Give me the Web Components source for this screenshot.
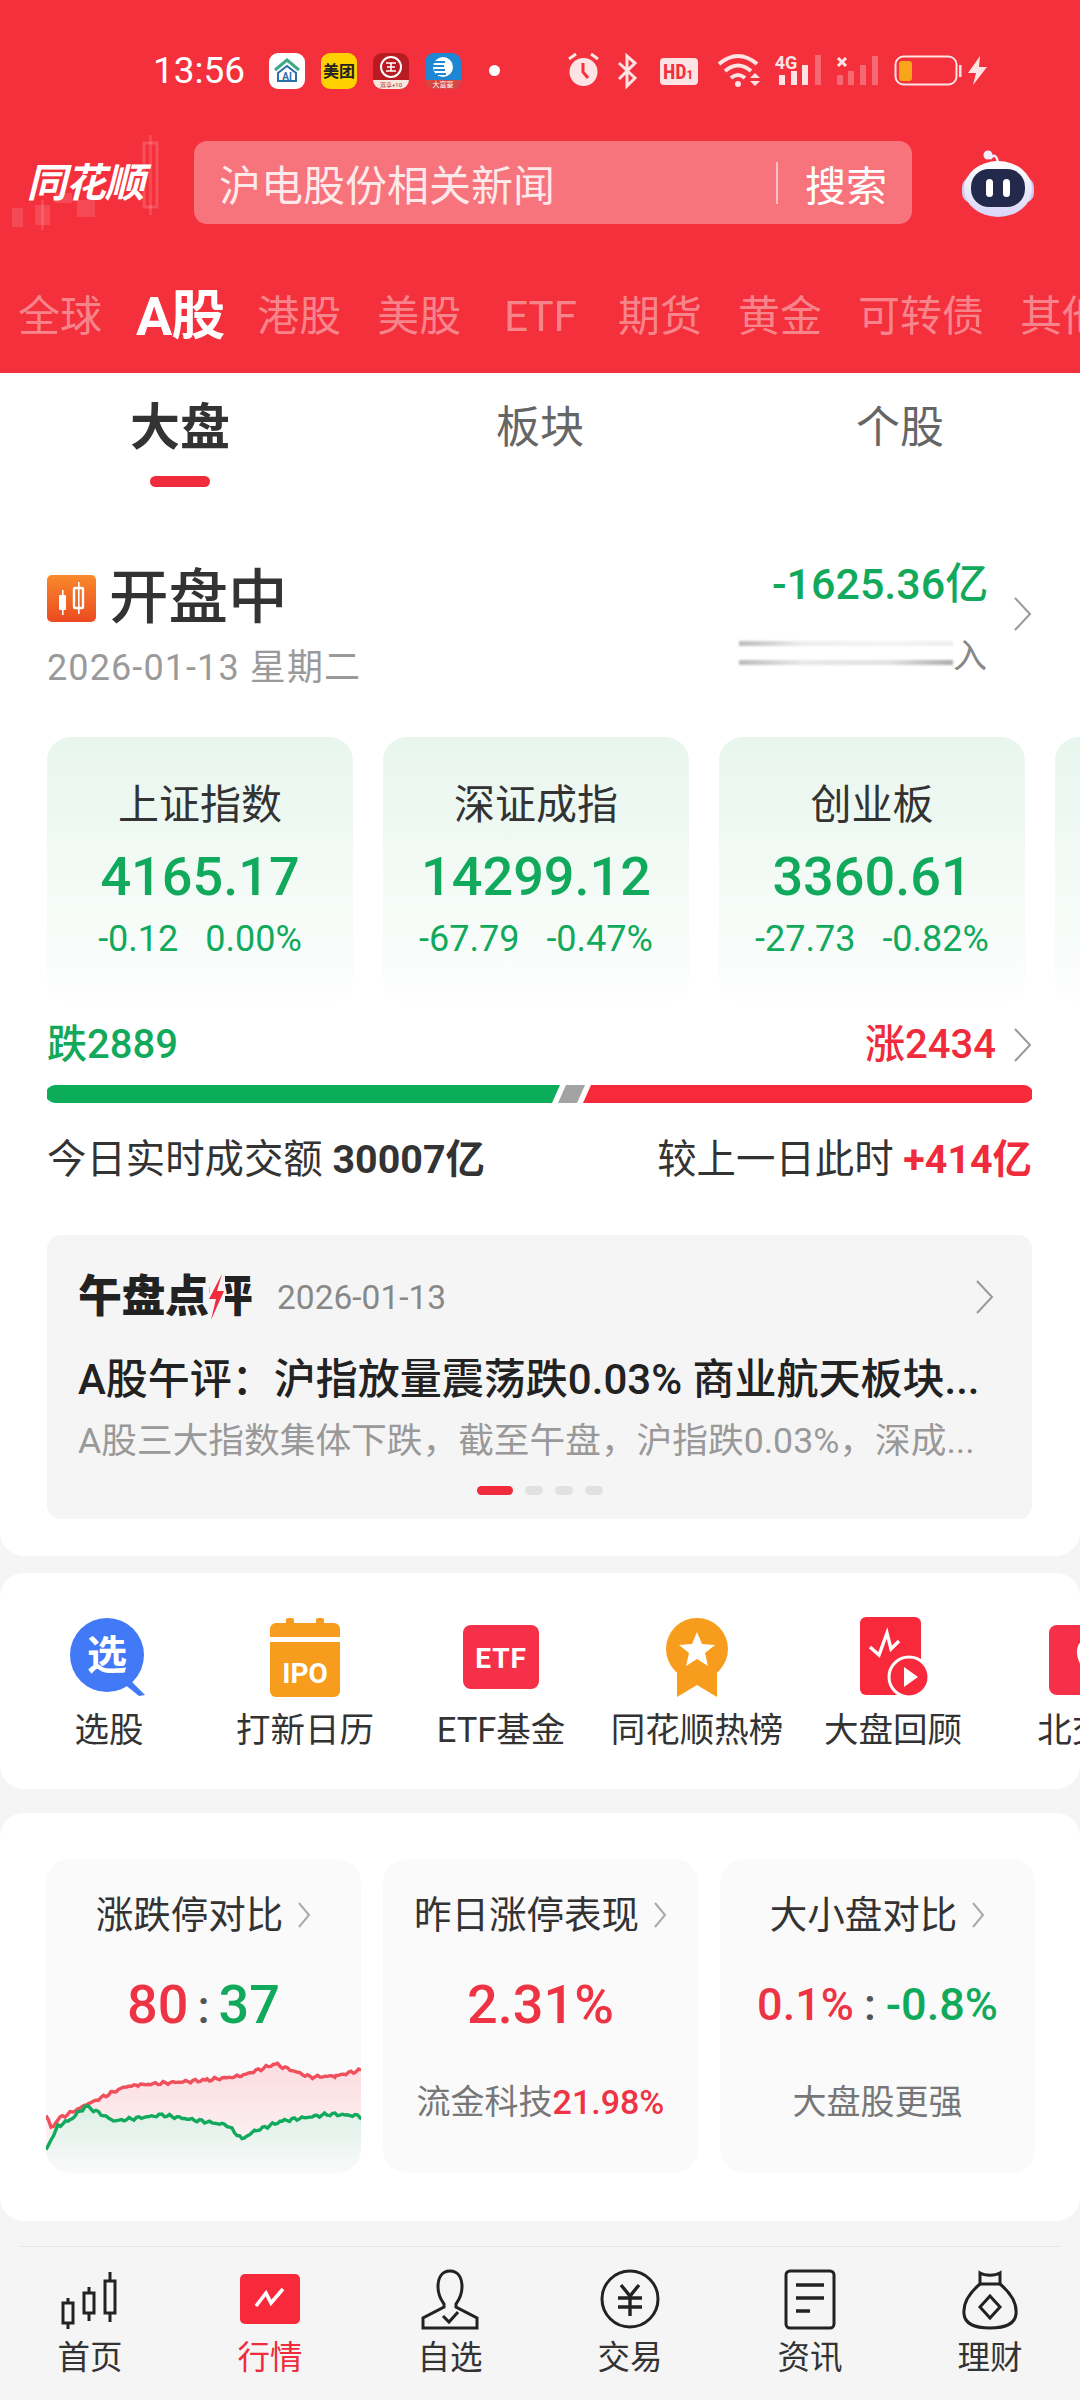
<!DOCTYPE html>
<html lang="zh">
<head>
<meta charset="utf-8">
<title>行情</title>
<style>
  html, body { margin: 0; padding: 0; }
  body {
    width: 1080px;
    height: 2400px;
    overflow: hidden;
    background: #f5f5f5;
    color: #333;
    font-family: Roboto, "Noto Sans CJK SC", sans-serif;
  }
</style>
</head>
<body>
<top-header></top-header>

<white-section kind="main">
  <sub-tabs></sub-tabs>
  <market-status></market-status>
  <index-row>
    <index-card name="上证指数" value="4165.17" change="-0.12" pct="0.00%"></index-card>
    <index-card name="深证成指" value="14299.12" change="-67.79" pct="-0.47%"></index-card>
    <index-card name="创业板" value="3360.61" change="-27.73" pct="-0.82%"></index-card>
    <index-card></index-card>
  </index-row>
  <breadth-bar></breadth-bar>
  <review-card></review-card>
</white-section>

<white-section kind="shortcuts">
  <shortcut-row>
    <shortcut-item icon="pick">选股</shortcut-item>
    <shortcut-item icon="ipo">打新日历</shortcut-item>
    <shortcut-item icon="etf">ETF基金</shortcut-item>
    <shortcut-item icon="medal">同花顺热榜</shortcut-item>
    <shortcut-item icon="replay">大盘回顾</shortcut-item>
    <shortcut-item icon="north">北交所</shortcut-item>
  </shortcut-row>
</white-section>

<white-section kind="compare">
  <compare-row>
    <compare-card title="涨跌停对比">
      <span slot="value" style="font-size:54px;font-weight:500"><span style="color:#ee3344">80</span><span style="color:#555;margin:0 9px;font-size:46px">:</span><span style="color:#11a95c">37</span></span>
      <limit-chart slot="foot"></limit-chart>
    </compare-card>
    <compare-card title="昨日涨停表现">
      <span slot="value" style="font-size:54px;font-weight:500;color:#ee3344">2.31%</span>
      <span slot="foot" class="foot" style="display:block;text-align:center;margin-top:41px;font-size:34px;line-height:44px;color:#777">流金科技<span style="color:#ee3344;font-weight:500">21.98%</span></span>
    </compare-card>
    <compare-card title="大小盘对比">
      <span slot="value" style="font-size:45px;font-weight:500"><span style="color:#ee3344">0.1%</span><span style="color:#555;margin:0 10px">:</span><span style="color:#11a95c">-0.8%</span></span>
      <span slot="foot" style="display:block;text-align:center;margin-top:41px;font-size:34px;line-height:44px;color:#777">大盘股更强</span>
    </compare-card>
  </compare-row>
</white-section>

<bottom-nav>
  <nav-item icon="home">首页</nav-item>
  <nav-item icon="quote" active>行情</nav-item>
  <nav-item icon="self">自选</nav-item>
  <nav-item icon="trade">交易</nav-item>
  <nav-item icon="news">资讯</nav-item>
  <nav-item icon="money">理财</nav-item>
</bottom-nav>

<script>
class ChevRight extends HTMLElement {
    constructor() {
        super();
        this.attachShadow({ mode: 'open' });
    }

    connectedCallback() {
        const w = this.getAttribute('w') || 19;
        const h = this.getAttribute('h') || 36;
        const color = this.getAttribute('color') || '#999';
        this.shadowRoot.innerHTML = `
            <style>:host { display: inline-flex; flex: none; }</style>
            <svg width="${w}" height="${h}" viewBox="0 0 ${w} ${h}">
                <path d="M2 2 L${w - 2} ${h / 2} L2 ${h - 2}" fill="none" stroke="${color}" stroke-width="2"/>
            </svg>`;
    }
}

class StatusBar extends HTMLElement {
    constructor() {
        super();
        this.attachShadow({ mode: 'open' });
    }

    connectedCallback() {
        const s = '#fde3e3';
        const dim = 'rgba(255,255,255,.28)';
        this.shadowRoot.innerHTML = `
            <style>
                :host { display: flex; align-items: center; height: 141px; padding-left: 153px; box-sizing: border-box; color: #fff; }
                .time { width: 93px; font-size: 37px; line-height: 40px; }
                .apps { display: flex; gap: 16px; margin-left: 23px; }
                .app { width: 36px; height: 36px; border-radius: 9px; overflow: hidden; display: block; }
                .dot { width: 11px; height: 11px; border-radius: 50%; background: #fff; margin-left: 28px; }
                .sys { margin-left: auto; margin-right: 90px; display: block; }
            </style>
            <span class="time">13:56</span>
            <div class="apps">
                <svg class="app" viewBox="0 0 36 36">
                    <rect width="36" height="36" fill="#fff"/>
                    <path d="M6 17 L18 7 L30 17" fill="none" stroke="#3eaa8c" stroke-width="3"/>
                    <path d="M9 20 V28 H27 V20 L18 13 Z" fill="none" stroke="#2a6fa8" stroke-width="2"/>
                    <text x="18" y="27" font-size="10" font-weight="700" fill="#2a6fa8" text-anchor="middle">AI</text>
                </svg>
                <svg class="app" viewBox="0 0 36 36">
                    <rect width="36" height="36" fill="#ffd100"/>
                    <text x="18" y="24" font-size="16" font-weight="700" fill="#222" text-anchor="middle">美团</text>
                </svg>
                <svg class="app" viewBox="0 0 36 36">
                    <rect width="36" height="36" fill="#b81c22"/>
                    <rect y="27" width="36" height="9" fill="#f6e9e2"/>
                    <circle cx="18" cy="14" r="10" fill="none" stroke="#fff" stroke-width="2"/>
                    <path d="M13 10 H23 M13 18 H23 M18 10 V18 M14 14 H22" stroke="#fff" stroke-width="1.6"/>
                    <text x="18" y="34" font-size="6" fill="#b81c22" text-anchor="middle">双享+10</text>
                </svg>
                <svg class="app" viewBox="0 0 36 36">
                    <rect width="36" height="36" fill="#1d87d3"/>
                    <circle cx="18" cy="14" r="10" fill="#fff"/>
                    <path d="M9 9 H20 M8 13 H19 M9 17 H20 M11 21 H21" stroke="#1d87d3" stroke-width="2"/>
                    <rect y="27" width="36" height="9" fill="#d8473f"/>
                    <text x="18" y="34" font-size="7" fill="#fff" text-anchor="middle">大富豪</text>
                </svg>
            </div>
            <span class="dot"></span>
            <svg class="sys" width="422" height="40" viewBox="0 0 422 40">
                <circle cx="15.5" cy="21" r="14" fill="${s}"/>
                <path d="M15 12 V21 L20 27" fill="none" stroke="#f3303c" stroke-width="3"/>
                <path d="M1 8 L8 3 M30 8 L23 3" stroke="${s}" stroke-width="3"/>
                <path d="M51 12 L67 27 L59 35 V5 L67 12 L51 28" fill="none" stroke="${s}" stroke-width="3"/>
                <rect x="92" y="7" width="38" height="27" rx="4" fill="${s}"/>
                <text x="110" y="28" font-size="20" font-weight="700" fill="#f3303c" text-anchor="middle" font-family="Roboto Condensed, Roboto, sans-serif">HD<tspan font-size="13">1</tspan></text>
                <path d="M151 13 Q170 -3 189 13" fill="none" stroke="${s}" stroke-width="4"/>
                <path d="M157 20 Q170 9 183 20" fill="none" stroke="${s}" stroke-width="4"/>
                <path d="M163 27 Q170 21 177 27" fill="none" stroke="${s}" stroke-width="4"/>
                <circle cx="170" cy="33" r="3" fill="${s}"/>
                <path d="M182 27 L187 22 L192 27 Z" fill="${s}"/>
                <path d="M182 30 L192 30 L187 35 Z" fill="${s}"/>
                <text x="218" y="18" font-size="18" font-weight="700" fill="${s}" text-anchor="middle">4G</text>
                <rect x="211" y="24" width="6" height="10" fill="${s}"/>
                <rect x="223" y="20" width="6" height="14" fill="${s}"/>
                <rect x="234" y="14" width="6" height="20" fill="${s}"/>
                <rect x="247" y="4" width="6" height="30" fill="${dim}"/>
                <path d="M270 7 L278 15 M278 7 L270 15" stroke="${s}" stroke-width="3"/>
                <rect x="269" y="24" width="6" height="10" fill="${dim}"/>
                <rect x="280" y="20" width="6" height="14" fill="${dim}"/>
                <rect x="292" y="14" width="6" height="20" fill="${dim}"/>
                <rect x="304" y="5" width="6" height="29" fill="${dim}"/>
                <rect x="327.5" y="5.5" width="61" height="28" rx="8" fill="none" stroke="${s}" stroke-width="2"/>
                <rect x="331" y="10" width="13" height="20" rx="3" fill="#f9a51a"/>
                <rect x="391" y="14" width="2.5" height="12" fill="${s}"/>
                <path d="M412 5 L400 22 H408 L405 34 L419 16 H411 Z" fill="${s}"/>
            </svg>`;
    }
}

class SearchRow extends HTMLElement {
    constructor() {
        super();
        this.attachShadow({ mode: 'open' });
    }

    connectedCallback() {
        this.shadowRoot.innerHTML = `
            <style>
                :host { display: flex; align-items: center; height: 83px; position: relative; color: #fff; }
                .logo { width: 194px; flex: none; height: 83px; position: relative; }
                .candles { position: absolute; left: 0; top: -16px; }
                .name {
                    position: absolute; left: 30px; top: 18px;
                    font-size: 40px; line-height: 50px; font-weight: 700; letter-spacing: -1px;
                    transform: skewX(-14deg); white-space: nowrap;
                }
                .box {
                    width: 718px; height: 83px; box-sizing: border-box; border-radius: 13px;
                    background: rgba(255,255,255,.33); display: flex; align-items: center; padding: 0 25px;
                }
                .hint { flex: 1; font-size: 42px; color: rgba(255,255,255,.85); white-space: nowrap; }
                .line { width: 2px; height: 42px; background: rgba(255,255,255,.55); margin-right: 27px; }
                .go { font-size: 41px; white-space: nowrap; }
                .robot { margin-left: 50px; }
            </style>
            <div class="logo">
                <svg class="candles" width="180" height="110" viewBox="0 0 180 110" fill="rgba(255,255,255,.13)">
                    <rect x="12" y="83" width="11" height="19"/>
                    <rect x="35" y="80" width="15" height="20"/><rect x="41" y="75" width="3" height="30"/>
                    <rect x="55" y="68" width="17" height="10"/>
                    <rect x="77" y="75" width="18" height="17"/>
                    <rect x="144" y="18" width="13" height="64" fill="none" stroke="rgba(255,255,255,.16)" stroke-width="3"/>
                    <rect x="149" y="10" width="3" height="80"/>
                </svg>
                <span class="name">同花顺</span>
            </div>
            <div class="box">
                <span class="hint">沪电股份相关新闻</span>
                <span class="line"></span>
                <span class="go">搜索</span>
            </div>
            <svg class="robot" width="72" height="72" viewBox="0 0 72 72">
                <defs>
                    <linearGradient id="shell" x1="0" y1="0" x2="0" y2="1">
                        <stop offset="0" stop-color="#ffffff"/><stop offset="1" stop-color="#d9d6f7"/>
                    </linearGradient>
                </defs>
                <path d="M28 12 Q34 4 36 16" fill="none" stroke="#f1eefc" stroke-width="2.5"/>
                <circle cx="26" cy="8" r="4.5" fill="#f4f0ff"/>
                <rect x="0" y="30" width="72" height="26" rx="10" fill="#cfcbee"/>
                <ellipse cx="36" cy="42" rx="34" ry="28" fill="url(#shell)"/>
                <rect x="9" y="22" width="54" height="38" rx="18" fill="#23294a"/>
                <rect x="24" y="32" width="7" height="18" rx="3.5" fill="#fff"/>
                <rect x="41" y="32" width="7" height="18" rx="3.5" fill="#fff"/>
            </svg>`;
    }
}

class MarketTabs extends HTMLElement {
    constructor() {
        super();
        this.attachShadow({ mode: 'open' });
    }

    connectedCallback() {
        const tabs = ['全球', 'A股', '港股', '美股', 'ETF', '期货', '黄金', '可转债', '其他'];
        this.shadowRoot.innerHTML = `
            <style>
                :host { display: flex; align-items: center; gap: 36px; height: 149px; box-sizing: border-box; padding: 63px 0 26px 18px; overflow: hidden; white-space: nowrap; }
                span { flex: none; font-size: 42px; line-height: 60px; color: rgba(255,255,255,.42); }
                .on { font-size: 54px; font-weight: 700; color: #fff; letter-spacing: -1px; margin: 0 -3px 0 -2px; }
                .latin { margin: 0 5px 0 7px; }
            </style>
            ${tabs.map(t => `<span class="${t === 'A股' ? 'on' : t === 'ETF' ? 'latin' : ''}">${t}</span>`).join('')}`;
    }
}

class TopHeader extends HTMLElement {
    constructor() {
        super();
        this.attachShadow({ mode: 'open' });
    }

    connectedCallback() {
        this.shadowRoot.innerHTML = `
            <style>:host { display: block; height: 373px; background: #f3303c; overflow: hidden; }</style>
            <status-bar></status-bar>
            <search-row></search-row>
            <market-tabs></market-tabs>`;
    }
}

class WhiteSection extends HTMLElement {
    constructor() {
        super();
        this.attachShadow({ mode: 'open' });
    }

    connectedCallback() {
        this.shadowRoot.innerHTML = `
            <style>
                :host { display: block; background: #fff; border-radius: 24px; overflow: hidden; }
                :host([kind="main"]) { border-radius: 0 0 24px 24px; padding-bottom: 37px; }
                :host([kind="shortcuts"]) { margin-top: 17px; height: 216px; }
                :host([kind="compare"]) { margin-top: 24px; height: 408px; }
            </style>
            <slot></slot>`;
    }
}

class SubTabs extends HTMLElement {
    constructor() {
        super();
        this.attachShadow({ mode: 'open' });
    }

    connectedCallback() {
        this.shadowRoot.innerHTML = `
            <style>
                :host { display: grid; grid-template-columns: repeat(3, 360px); padding-top: 25px; height: 113px; }
                div { text-align: center; font-size: 44px; line-height: 60px; color: #666; }
                .on { font-size: 50px; font-weight: 700; color: #333; }
                i { display: block; width: 60px; height: 11px; border-radius: 6px; background: #f02b3c; margin: 18px auto 0; }
            </style>
            <div class="on">大盘<i></i></div>
            <div>板块</div>
            <div>个股</div>`;
    }
}

class MarketStatus extends HTMLElement {
    constructor() {
        super();
        this.attachShadow({ mode: 'open' });
    }

    connectedCallback() {
        this.shadowRoot.innerHTML = `
            <style>
                :host { display: flex; height: 177px; padding: 0 48px 0 47px; box-sizing: border-box; margin-top: 49px; }
                .left { flex: 1; padding-top: 3px; }
                .state { display: flex; align-items: center; gap: 13px; font-size: 59.5px; line-height: 70px; font-weight: 500; color: #333; }
                .date { margin-top: 15px; font-size: 36px; line-height: 40px; color: #9a9a9a; letter-spacing: 1.1px; }
                .right { width: 215px; text-align: right; }
                .flow { font-size: 43px; line-height: 48px; font-weight: 500; color: #11a95c; white-space: nowrap; }
                .sub { display: flex; align-items: center; margin: 27px 0 0 -33px; height: 36px; font-size: 34px; color: #888; }
                .smear {
                    flex: 1; height: 24px;
                    background:
                        linear-gradient(90deg, #bbb, #eee 30%, #f4f4f4 70%, #eee) 0 0 / 100% 5px no-repeat,
                        linear-gradient(90deg, #bbb, #e8e8e8 30%, #e2e2e2 70%, #aaa) 0 19px / 100% 5px no-repeat;
                    filter: blur(1px);
                }
                chev-right { margin: 36px 0 0 26px; }
            </style>
            <div class="left">
                <div class="state">
                    <svg width="49" height="47" viewBox="0 0 49 47">
                        <defs><linearGradient id="o" x1="0" y1="0" x2="0" y2="1">
                            <stop offset="0" stop-color="#f9892b"/><stop offset="1" stop-color="#ec4a21"/>
                        </linearGradient></defs>
                        <rect width="49" height="47" rx="5" fill="url(#o)"/>
                        <rect x="12" y="20" width="7" height="15" rx="1" fill="#fff"/><rect x="15" y="15" width="1.6" height="25" fill="#fff"/>
                        <rect x="27" y="13" width="9" height="20" rx="1" fill="none" stroke="#fff" stroke-width="2.4"/><rect x="31" y="7" width="1.6" height="32" fill="#fff"/>
                    </svg>
                    <span>开盘中</span>
                </div>
                <div class="date">2026-01-13 星期二</div>
            </div>
            <div class="right">
                <div class="flow">-1625.36亿</div>
                <div class="sub"><span class="smear"></span><span>入</span></div>
            </div>
            <chev-right></chev-right>`;
    }
}

class IndexRow extends HTMLElement {
    constructor() {
        super();
        this.attachShadow({ mode: 'open' });
    }

    connectedCallback() {
        this.shadowRoot.innerHTML = `
            <style>:host { display: flex; gap: 30px; padding-left: 47px; overflow: hidden; }</style>
            <slot></slot>`;
    }
}

class IndexCard extends HTMLElement {
    constructor() {
        super();
        this.attachShadow({ mode: 'open' });
    }

    connectedCallback() {
        const name = this.getAttribute('name');
        const body = !name ? '' : `
            <div class="name">${name}</div>
            <div class="value">${this.getAttribute('value')}</div>
            <div class="small"><span>${this.getAttribute('change')}</span><span>${this.getAttribute('pct')}</span></div>`;
        this.shadowRoot.innerHTML = `
            <style>
                :host {
                    display: block; flex: none; width: 306px; height: 265px; box-sizing: border-box; padding-top: 44px;
                    border-radius: 24px; text-align: center; background: linear-gradient(#e8f6ee, #fdfefd);
                }
                .name { font-size: 41px; line-height: 48px; color: #333; }
                .value { margin-top: 16px; font-size: 54px; line-height: 64px; font-weight: 500; color: #11a95c; }
                .small { margin-top: 10px; display: flex; justify-content: center; gap: 27px; font-size: 36px; line-height: 40px; color: #11a95c; }
            </style>
            ${body}`;
    }
}

class BreadthBar extends HTMLElement {
    constructor() {
        super();
        this.attachShadow({ mode: 'open' });
    }

    connectedCallback() {
        this.shadowRoot.innerHTML = `
            <style>
                :host { display: block; padding: 18px 48px 0 47px; }
                .counts { display: flex; align-items: center; font-size: 40px; line-height: 50px; font-weight: 500; }
                .down { color: #11a95c; flex: 1; }
                .up { color: #f02b3c; margin-right: 17px; }
                svg { display: block; margin-top: 15px; }
                .amount { display: flex; justify-content: space-between; margin-top: 32px; font-size: 39.4px; line-height: 50px; color: #333; }
                b { font-weight: 700; }
                .amount .red { color: #f02b3c; font-weight: 700; }
            </style>
            <div class="counts">
                <span class="down">跌2889</span>
                <span class="up">涨2434</span>
                <chev-right></chev-right>
            </div>
            <svg width="985" height="18" viewBox="0 0 985 18">
                <path d="M8 0 H513 L505 18 H8 A8 8 0 0 1 8 0 Z" fill="#0bad5b"/>
                <path d="M519 0 H538 L530 18 H511 Z" fill="#a3a3a3"/>
                <path d="M544 0 H977 A8 8 0 0 1 977 18 H536 Z" fill="#f7293b"/>
            </svg>
            <div class="amount">
                <span>今日实时成交额 <b>30007亿</b></span>
                <span>较上一日此时 <span class="red">+414亿</span></span>
            </div>`;
    }
}

class ReviewCard extends HTMLElement {
    constructor() {
        super();
        this.attachShadow({ mode: 'open' });
    }

    connectedCallback() {
        this.shadowRoot.innerHTML = `
            <style>
                :host {
                    display: block; margin: 50px 48px 0 47px; height: 284px; box-sizing: border-box; padding: 37px 31px 0;
                    background: #f5f5f5; border-radius: 14px;
                }
                .top { display: flex; align-items: center; height: 50px; }
                .logo { position: relative; font-size: 44px; line-height: 50px; font-weight: 900; color: #222; letter-spacing: -.5px; white-space: nowrap; }
                .logo svg { position: absolute; left: 129px; top: 0; }
                .date { margin-left: 25px; flex: 1; font-size: 33.5px; color: #888; }
                .top chev-right { margin-right: 7px; }
                .title, .desc { white-space: nowrap; overflow: hidden; }
                .title { margin-top: 30px; font-size: 42px; line-height: 56px; font-weight: 500; color: #222; }
                .desc { margin-top: 8px; font-size: 35.7px; line-height: 50px; color: #999; }
                .dots { display: flex; justify-content: center; gap: 12px; margin-top: 20px; }
                .dots i { width: 18px; height: 9px; border-radius: 5px; background: #e1e1e1; }
                .dots i.on { width: 36px; background: #f02b3c; }
            </style>
            <div class="top">
                <span class="logo">午盘点评<svg width="18" height="50" viewBox="0 0 18 50"><rect x="3" width="15" height="50" fill="#f5f5f5"/><path d="M15 2 L2 27 H9 L4 48 L17 19 H10 Z" fill="#f02b3c"/></svg></span>
                <span class="date">2026-01-13</span>
                <chev-right></chev-right>
            </div>
            <div class="title">A股午评：沪指放量震荡跌0.03% 商业航天板块...</div>
            <div class="desc">A股三大指数集体下跌，截至午盘，沪指跌0.03%，深成...</div>
            <div class="dots"><i class="on"></i><i></i><i></i><i></i></div>`;
    }
}

class ShortcutRow extends HTMLElement {
    constructor() {
        super();
        this.attachShadow({ mode: 'open' });
    }

    connectedCallback() {
        this.shadowRoot.innerHTML = `
            <style>:host { display: flex; padding: 44px 0 0 11px; overflow: hidden; }</style>
            <slot></slot>`;
    }
}

const SHORTCUT_ICONS = {
    pick: `<circle cx="38" cy="38" r="37" fill="#4179f6"/><path d="M60 62 L76 78 L70 79 L54 66 Z" fill="#4179f6"/>
           <text x="38" y="52" font-size="40" font-weight="700" fill="#fff" text-anchor="middle">选</text>`,
    ipo: `<rect x="5" y="6" width="70" height="74" rx="6" fill="#f79c1c"/><rect x="5" y="20" width="70" height="5" fill="#fff"/>
          <rect x="21" y="1" width="8" height="10" rx="2" fill="#f79c1c"/><rect x="51" y="1" width="8" height="10" rx="2" fill="#f79c1c"/>
          <text x="40" y="66" font-size="28" font-weight="700" fill="#fff" text-anchor="middle">IPO</text>`,
    etf: `<rect x="2" y="8" width="76" height="64" rx="8" fill="#f7304a"/>
          <text x="40" y="51" font-size="28" font-weight="700" fill="#fff" text-anchor="middle" letter-spacing="1">ETF</text>`,
    medal: `<path d="M20 50 V80 L40 68 L60 80 V50 Z" fill="#f79c1c"/><circle cx="40" cy="32" r="31" fill="#f79c1c"/>
            <path d="M40 15 L45 27 L58 28 L48 36 L51 49 L40 42 L29 49 L32 36 L22 28 L35 27 Z" fill="#fff"/>`,
    replay: `<rect x="7" y="0" width="61" height="78" rx="6" fill="#f7293b"/>
             <path d="M17 30 L26 38 L34 16 L38 32 L46 24" fill="none" stroke="#fff" stroke-width="3.4"/>
             <circle cx="56" cy="60" r="20" fill="#f7293b" stroke="#fff" stroke-width="3"/>
             <path d="M51 50 L65 60 L51 70 Z" fill="#fff"/>`,
    north: `<rect x="0" y="8" width="80" height="70" rx="8" fill="#f7304a"/>
            <path d="M40 22 C26 22 22 40 40 60 C58 40 54 22 40 22 Z" fill="#fff"/>`
};

class ShortcutItem extends HTMLElement {
    constructor() {
        super();
        this.attachShadow({ mode: 'open' });
    }

    connectedCallback() {
        this.shadowRoot.innerHTML = `
            <style>
                :host { display: block; flex: none; width: 196px; text-align: center; }
                svg { display: block; margin: 0 auto; }
                div { margin-top: 11px; font-size: 34.5px; line-height: 44px; color: #333; white-space: nowrap; }
            </style>
            <svg width="80" height="80" viewBox="0 0 80 80">${SHORTCUT_ICONS[this.getAttribute('icon')]}</svg>
            <div><slot></slot></div>`;
    }
}

class CompareRow extends HTMLElement {
    constructor() {
        super();
        this.attachShadow({ mode: 'open' });
    }

    connectedCallback() {
        this.shadowRoot.innerHTML = `
            <style>:host { display: flex; gap: 22px; padding: 46px 46px 0; }</style>
            <slot></slot>`;
    }
}

class CompareCard extends HTMLElement {
    constructor() {
        super();
        this.attachShadow({ mode: 'open' });
    }

    connectedCallback() {
        this.shadowRoot.innerHTML = `
            <style>
                :host { display: block; flex: none; width: 315px; height: 314px; box-sizing: border-box; padding-top: 34px; background: #fafafa; border-radius: 24px; overflow: hidden; }
                .title { display: flex; align-items: center; justify-content: center; gap: 14px; font-size: 37.5px; line-height: 44px; color: #333; }
                .value { margin-top: 32px; height: 70px; display: flex; align-items: center; justify-content: center; white-space: nowrap; }
            </style>
            <div class="title"><span>${this.getAttribute('title')}</span><chev-right w="14" h="28" color="#aaa"></chev-right></div>
            <div class="value"><slot name="value"></slot></div>
            <slot name="foot"></slot>`;
    }
}

class LimitChart extends HTMLElement {
    constructor() {
        super();
        this.attachShadow({ mode: 'open' });
    }

    // walks between the anchor points with a bit of wobble so it reads like a tick line
    jagged(points, seed) {
        const out = [];
        for (let i = 0; i < points.length - 1; i++) {
            const [x0, y0] = points[i];
            const [x1, y1] = points[i + 1];
            for (let x = x0; x < x1; x += 2.5) {
                const t = (x - x0) / (x1 - x0);
                const wobble = Math.sin(x * 1.7 + seed) * 0.9 + Math.sin(x * 0.61 + seed * 2) * 0.9;
                out.push([x, y0 + (y1 - y0) * t + wobble]);
            }
        }
        out.push(points[points.length - 1]);
        return out;
    }

    connectedCallback() {
        const red = this.jagged([[0, 64], [5, 78], [14, 68], [40, 55], [78, 37], [92, 35], [161, 30], [195, 26], [229, 14], [264, 27], [290, 26], [315, 20]], 1);
        const green = this.jagged([[0, 100], [12, 76], [24, 70], [40, 56], [68, 71], [116, 65], [181, 75], [196, 89], [209, 81], [236, 71], [284, 64], [315, 66]], 2.3);
        const line = pts => pts.map(p => p[0].toFixed(1) + ' ' + p[1].toFixed(1)).join(' L');
        const band = 'M' + line(red) + ' L' + line(green.slice().reverse()) + ' Z';
        const under = 'M' + line(green) + ' L315 123 L0 123 Z';
        this.shadowRoot.innerHTML = `
            <style>
                :host { display: block; margin-top: 11px; height: 123px; }
                svg { display: block; }
            </style>
            <svg width="315" height="123" viewBox="0 0 315 123">
                <defs>
                    <linearGradient id="g" x1="0" y1="0" x2="0" y2="1">
                        <stop offset="0" stop-color="#dcefe5"/><stop offset="1" stop-color="#fafafa"/>
                    </linearGradient>
                    <linearGradient id="r" x1="0" y1="0" x2="0" y2="1">
                        <stop offset="0" stop-color="#fbdcdf"/><stop offset="1" stop-color="#fdf3f4"/>
                    </linearGradient>
                </defs>
                <path d="${band}" fill="url(#r)"/>
                <path d="${under}" fill="url(#g)"/>
                <path d="M${line(red)}" fill="none" stroke="#f0505c" stroke-width="3.4"/>
                <path d="M${line(green)}" fill="none" stroke="#11a95c" stroke-width="3.4"/>
            </svg>`;
    }
}

class BottomNav extends HTMLElement {
    constructor() {
        super();
        this.attachShadow({ mode: 'open' });
    }

    connectedCallback() {
        this.shadowRoot.innerHTML = `
            <style>
                :host { display: grid; grid-template-columns: repeat(6, 180px); margin-top: 25px; padding-top: 23px; position: relative; }
                .rule { position: absolute; left: 20px; right: 20px; top: 0; height: 1px; background: #e6e6e6; }
            </style>
            <div class="rule"></div>
            <slot></slot>`;
    }
}

const NAV_ICONS = {
    home: `<g fill="none" stroke="#222" stroke-width="3">
             <rect x="3" y="34" width="10" height="20"/><path d="M8 29 V34 M8 54 V60"/>
             <rect x="24" y="24" width="10" height="20"/><path d="M29 18 V24 M29 44 V52"/>
             <rect x="45" y="12" width="10" height="32"/><path d="M50 3 V12 M50 44 V53"/>
           </g>`,
    quote: `<rect y="5" width="60" height="50" rx="5" fill="#f7293b"/>
            <path d="M16 37 L26 24 L31 34 L43 20" fill="none" stroke="#fff" stroke-width="3.6"/>`,
    self: `<g fill="none" stroke="#222" stroke-width="3">
             <path d="M30 2 C21 2 18 10 18 18 C18 27 22 32 24 35 V38 L3 49 V59 H57 V49 L36 38 V35 C38 32 42 27 42 18 C42 10 39 2 30 2 Z"/>
             <path d="M23 47 L29 53 L38 43"/>
           </g>`,
    trade: `<circle cx="30" cy="30" r="28" fill="none" stroke="#222" stroke-width="3"/>
            <path d="M21 16 L30 27 L39 16 M18 29 H42 M18 38 H42 M30 27 V47" fill="none" stroke="#222" stroke-width="3.4"/>`,
    news: `<rect x="6" y="2" width="48" height="57" rx="4" fill="none" stroke="#222" stroke-width="3"/>
           <path d="M16 16 H44 M16 29 H44 M16 42 H30" stroke="#222" stroke-width="3.4"/>`,
    money: `<g fill="none" stroke="#222" stroke-width="3">
              <path d="M20 4 C25 7 35 7 40 4 L40 15 H20 Z"/>
              <path d="M20 15 C8 25 3 35 4 45 C5 55 14 59 30 59 C46 59 55 55 56 45 C57 35 52 25 40 15"/>
              <path d="M30 27 L40 38 L30 49 L20 38 Z"/>
            </g>`
};

class NavItem extends HTMLElement {
    constructor() {
        super();
        this.attachShadow({ mode: 'open' });
    }

    connectedCallback() {
        this.shadowRoot.innerHTML = `
            <style>
                :host { display: block; text-align: center; color: #333; }
                :host([active]) { color: #f02b3c; }
                svg { display: block; margin: 0 auto; }
                div { margin-top: 5px; font-size: 32.5px; line-height: 44px; }
            </style>
            <svg width="60" height="62" viewBox="0 0 60 62">${NAV_ICONS[this.getAttribute('icon')]}</svg>
            <div><slot></slot></div>`;
    }
}

customElements.define('chev-right', ChevRight);
customElements.define('status-bar', StatusBar);
customElements.define('search-row', SearchRow);
customElements.define('market-tabs', MarketTabs);
customElements.define('top-header', TopHeader);
customElements.define('white-section', WhiteSection);
customElements.define('sub-tabs', SubTabs);
customElements.define('market-status', MarketStatus);
customElements.define('index-row', IndexRow);
customElements.define('index-card', IndexCard);
customElements.define('breadth-bar', BreadthBar);
customElements.define('review-card', ReviewCard);
customElements.define('shortcut-row', ShortcutRow);
customElements.define('shortcut-item', ShortcutItem);
customElements.define('compare-row', CompareRow);
customElements.define('compare-card', CompareCard);
customElements.define('limit-chart', LimitChart);
customElements.define('bottom-nav', BottomNav);
customElements.define('nav-item', NavItem);
</script>
</body>
</html>
